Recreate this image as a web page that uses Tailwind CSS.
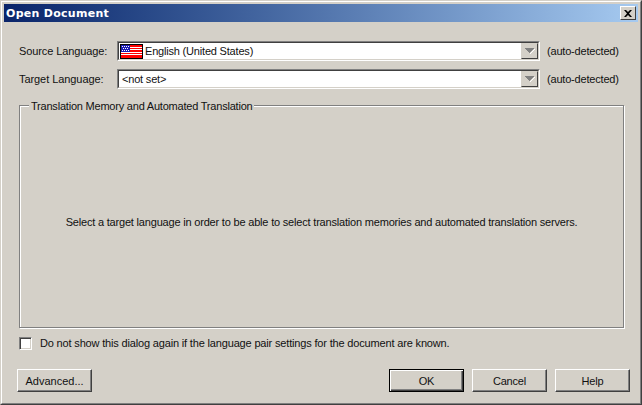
<!DOCTYPE html>
<html lang="en">
<head>
  <meta charset="UTF-8" />
  <title>Open Document</title>
  <script src="https://cdn.jsdelivr.net/npm/@tailwindcss/browser@4"></script>
</head>
<body class="m-0 w-[642px] h-[405px] overflow-hidden bg-[#d4d0c8] font-['Liberation_Sans',sans-serif] text-[11px] tracking-[-0.19px] leading-[14px] text-[#111]">
  <!-- window frame -->
  <div class="w-[642px] h-[405px] border border-t-[#d4d0c8] border-l-[#d4d0c8] border-r-[#404040] border-b-[#404040]">
    <div class="w-full h-full border border-t-white border-l-white border-r-[#808080] border-b-[#808080] p-[2px] flex flex-col">
      <!-- title bar -->
      <div class="h-[18px] shrink-0 flex items-center justify-between pl-[2px] pr-[2px] bg-gradient-to-r from-[#0a246a] to-[#a6caf0]">
        <span class="pt-[1px] font-['DejaVu_Sans',sans-serif] font-bold text-[11px] tracking-[0.28px] text-white">Open Document</span>
        <button class="w-[16px] h-[14px] bg-[#d4d0c8] border border-t-white border-l-white border-r-[#404040] border-b-[#404040] flex items-center justify-center">
          <svg width="8" height="7" viewBox="0 0 8 7"><path d="M0 0h2l2 2 2-2h2L5 3.500 8 7H6L4 5 2 7H0l3-3.500z" fill="#000"/></svg>
        </button>
      </div>

      <!-- dialog body -->
      <div class="flex-1 flex flex-col pl-[13px] pr-[6px]">
        <!-- source language -->
        <div class="flex items-center mt-[19px] h-[20px]">
          <label class="w-[100px] pl-[2px] whitespace-nowrap tracking-[-0.1px]">Source Language:</label>
          <div class="w-[423px] h-[20px] flex border border-t-[#808080] border-l-[#808080] border-r-white border-b-white">
            <div class="flex-1 flex border border-t-[#404040] border-l-[#404040] border-r-[#d4d0c8] border-b-[#d4d0c8] bg-white">
              <div class="flex-1 flex items-center pl-[1px] gap-[2px]">
                <svg class="shrink-0" width="23" height="15" viewBox="0 0 23 15" shape-rendering="crispEdges">
                  <rect width="23" height="15" fill="#000"/>
                  <rect x="1" y="1" width="21" height="13" fill="#fff"/>
                  <rect x="1" y="1" width="21" height="2" fill="#ff0000"/>
                  <rect x="1" y="4" width="21" height="1" fill="#ff0000"/>
                  <rect x="1" y="6" width="21" height="2" fill="#ff0000"/>
                  <rect x="1" y="9" width="21" height="1" fill="#ff0000"/>
                  <rect x="1" y="11" width="21" height="3" fill="#ff0000"/>
                  <rect x="1" y="1" width="9" height="7" fill="#1c1cb4"/>
                  <path d="M2 2h1v1H2zM4 2h1v1H4zM6 2h1v1H6zM8 2h1v1H8zM3 4h1v1H3zM5 4h1v1H5zM7 4h1v1H7zM2 6h1v1H2zM4 6h1v1H4zM6 6h1v1H6zM8 6h1v1H8z" fill="#fff"/>
                </svg>
                <span>English (United States)</span>
              </div>
              <div class="w-[17px] h-full bg-[#d4d0c8] border border-t-[#d4d0c8] border-l-[#d4d0c8] border-r-[#404040] border-b-[#404040] flex items-center justify-center">
                <svg width="10" height="6" viewBox="0 0 10 6" shape-rendering="crispEdges"><path d="M0 0h9v1H8v1H7v1H6v1H5v1H4V4H3V3H2V2H1V1H0z" fill="#808080"/><path d="M9 1h1v1H9zM8 2h1v1H8zM7 3h1v1H7zM6 4h1v1H6zM5 5h1v1H5z" fill="#fff"/></svg>
              </div>
            </div>
          </div>
          <span class="ml-[7px] whitespace-nowrap">(auto-detected)</span>
        </div>

        <!-- target language -->
        <div class="flex items-center mt-[8px] h-[20px]">
          <label class="w-[100px] pl-[2px] whitespace-nowrap tracking-[-0.07px]">Target Language:</label>
          <div class="w-[423px] h-[20px] flex border border-t-[#808080] border-l-[#808080] border-r-white border-b-white">
            <div class="flex-1 flex border border-t-[#404040] border-l-[#404040] border-r-[#d4d0c8] border-b-[#d4d0c8] bg-white">
              <div class="flex-1 flex items-center pl-[3px]">&lt;not set&gt;</div>
              <div class="w-[17px] h-full bg-[#d4d0c8] border border-t-[#d4d0c8] border-l-[#d4d0c8] border-r-[#404040] border-b-[#404040] flex items-center justify-center">
                <svg width="10" height="6" viewBox="0 0 10 6" shape-rendering="crispEdges"><path d="M0 0h9v1H8v1H7v1H6v1H5v1H4V4H3V3H2V2H1V1H0z" fill="#808080"/><path d="M9 1h1v1H9zM8 2h1v1H8zM7 3h1v1H7zM6 4h1v1H6zM5 5h1v1H5z" fill="#fff"/></svg>
              </div>
            </div>
          </div>
          <span class="ml-[7px] whitespace-nowrap">(auto-detected)</span>
        </div>

        <!-- group box -->
        <div class="relative mt-[16px] ml-[2px] w-[605px] h-[223px] border border-[#808080] shadow-[inset_1px_1px_0_#fff,1px_1px_0_#fff] flex items-center justify-center pt-[11px]">
          <span class="absolute left-[9px] top-[-7px] px-[2px] bg-[#d4d0c8] whitespace-nowrap tracking-[-0.21px]">Translation Memory and Automated Translation</span>
          <p class="whitespace-nowrap">Select a target language in order to be able to select translation memories and automated translation servers.</p>
        </div>

        <!-- checkbox -->
        <div class="flex items-center mt-[8px] ml-[2px] h-[14px]">
          <div class="w-[13px] h-[13px] bg-white border border-t-[#808080] border-l-[#808080] border-r-white border-b-white shadow-[inset_1px_1px_0_#404040,inset_-1px_-1px_0_#d4d0c8]"></div>
          <span class="ml-[8px] whitespace-nowrap tracking-[-0.165px]">Do not show this dialog again if the language pair settings for the document are known.</span>
        </div>

        <!-- buttons -->
        <div class="flex items-start mt-[19px]">
          <button class="w-[75px] h-[23px] bg-[#d4d0c8] border border-t-white border-l-white border-r-[#404040] border-b-[#404040] shadow-[inset_-1px_-1px_0_#808080]"><span class="tracking-[0px]">Advanced...</span></button>
          <div class="flex gap-[8px] ml-auto mr-[2px]">
            <button class="w-[75px] h-[23px] bg-[#d4d0c8] border border-black shadow-[inset_1px_1px_0_#fff,inset_-1px_-1px_0_#404040,inset_-2px_-2px_0_#808080]">OK</button>
            <button class="w-[75px] h-[23px] bg-[#d4d0c8] border border-t-white border-l-white border-r-[#404040] border-b-[#404040] shadow-[inset_-1px_-1px_0_#808080]">Cancel</button>
            <button class="w-[75px] h-[23px] bg-[#d4d0c8] border border-t-white border-l-white border-r-[#404040] border-b-[#404040] shadow-[inset_-1px_-1px_0_#808080]">Help</button>
          </div>
        </div>
      </div>
    </div>
  </div>
</body>
</html>
